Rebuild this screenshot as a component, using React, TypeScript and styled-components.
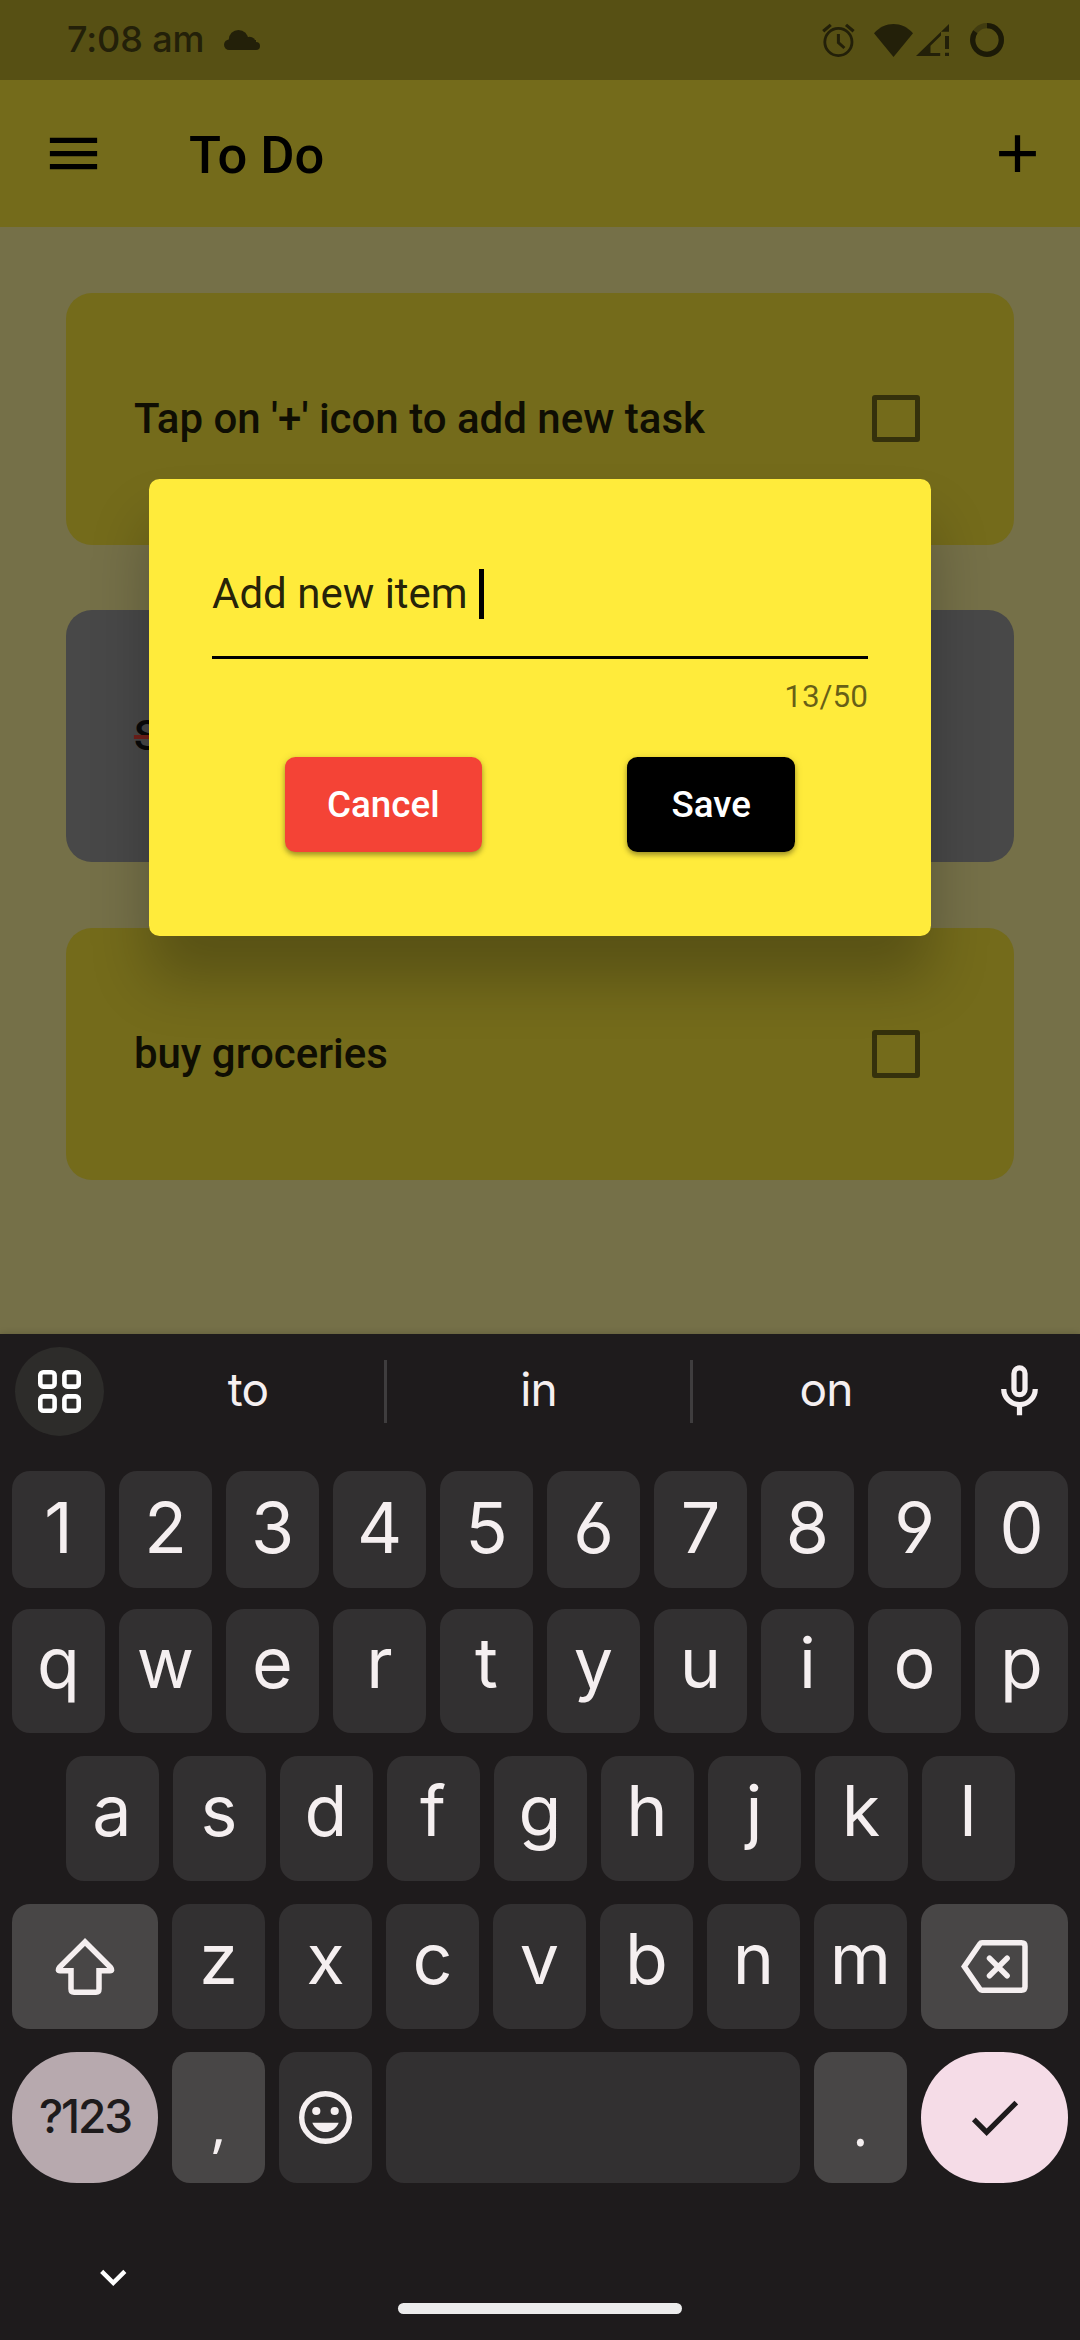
import React from "react";
import styled, { createGlobalStyle } from "styled-components";

const GlobalStyle = createGlobalStyle`
  html, body {
    margin: 0;
    padding: 0;
    background: #1e1b1c;
  }
  * { box-sizing: border-box; }
  button { border: 0; margin: 0; padding: 0; font: inherit; }
`;

const Screen = styled.div`
  position: relative;
  width: 1080px;
  height: 2340px;
  overflow: hidden;
  display: flex;
  flex-direction: column;
  font-family: Roboto, sans-serif;
`;

/* ---------- Status bar ---------- */

const StatusBar = styled.header`
  height: 80px;
  flex: none;
  display: flex;
  align-items: center;
  padding: 0 76px 0 67px;
  background: #575014;
  color: #232009;
`;

const Clock = styled.span`
  width: 137px;
  margin-right: 20px;
  padding-bottom: 2px;
  font: 450 36px/78px Inter, sans-serif;
  letter-spacing: -0.1px;
  white-space: nowrap;
`;

const StatusIcons = styled.div`
  margin-left: auto;
  display: flex;
  align-items: center;
`;

const StatusIcon = styled.svg<{ $after?: number }>`
  display: block;
  margin-right: ${(p) => p.$after ?? 0}px;
`;

/* ---------- Page ---------- */

const Page = styled.main`
  position: relative;
  height: 1254px;
  flex: none;
  display: flex;
  flex-direction: column;
  background: #757048;
`;

const AppBar = styled.div`
  height: 147px;
  display: flex;
  align-items: center;
  padding: 0 31px 0 42px;
  background: #746b1b;
  color: #000;
`;

const BarTitle = styled.h1`
  flex: 1;
  margin: 0 0 0 84px;
  padding-top: 3px;
  font-size: 52.5px;
  font-weight: 500;
  line-height: 60px;
`;

const IconButton = styled.button`
  display: flex;
  background: none;
  color: inherit;
`;

const TaskList = styled.div`
  display: flex;
  flex-direction: column;
  gap: 65.6px;
  padding: 65.6px;
`;

const TaskCard = styled.div<{ $done?: boolean }>`
  height: 252px;
  display: flex;
  align-items: center;
  justify-content: space-between;
  padding: 0 94.5px 0 68.3px;
  border-radius: 26px;
  background: ${(p) => (p.$done ? "#484848" : "#746b1b")};
`;

const TaskText = styled.span<{ $done?: boolean }>`
  font-size: 42px;
  font-weight: 500;
  line-height: 48px;
  color: ${(p) => (p.$done ? "#090909" : "#0f0e03")};
  text-decoration: ${(p) => (p.$done ? "line-through #701f19 4px" : "none")};
`;

const Checkbox = styled.span`
  width: 47.5px;
  height: 47.5px;
  border: 5px solid #35310c;
  border-radius: 3px;
`;

/* ---------- Dialog ---------- */

const DialogLayer = styled.div`
  position: absolute;
  inset: 80px 0 1006px;
  display: flex;
  justify-content: center;
  align-items: center;
`;

const Dialog = styled.form`
  width: 782px;
  height: 457px;
  display: flex;
  flex-direction: column;
  padding: 79px 63px 84px;
  border-radius: 10.5px;
  background: #ffeb3b;
  box-shadow: 0 44px 58px rgba(0, 0, 0, 0.24);
`;

const Field = styled.div`
  height: 101px;
  display: flex;
  align-items: flex-start;
  padding-top: 11px;
  border-bottom: 3px solid #000;
`;

const FieldText = styled.span`
  font-size: 42px;
  line-height: 50px;
  white-space: pre;
  color: rgba(0, 0, 0, 0.87);
`;

const Caret = styled.span`
  width: 5.5px;
  height: 50px;
  margin-left: 0.5px;
  background: #000;
`;

const Counter = styled.div`
  margin-top: 19px;
  font-size: 31.5px;
  line-height: 37px;
  text-align: right;
  color: rgba(0, 0, 0, 0.6);
`;

const Actions = styled.div`
  display: flex;
  justify-content: space-around;
  margin-top: auto;
`;

const ActionButton = styled.button<{ $tone: string; $width: number }>`
  width: ${(p) => p.$width}px;
  height: 94.5px;
  padding-top: 1px;
  border-radius: 10.5px;
  background: ${(p) => p.$tone};
  color: #fff;
  font-size: 36.75px;
  font-weight: 500;
  line-height: 94px;
  box-shadow: 0 3px 5px rgba(0, 0, 0, 0.32), 0 1px 10px rgba(0, 0, 0, 0.12);
`;

/* ---------- Keyboard ---------- */

const Keyboard = styled.section`
  position: relative;
  flex: 1;
  display: flex;
  flex-direction: column;
  background: #1e1b1c;
  color: #f5eff0;
  font-family: Inter, sans-serif;
  box-shadow: 0 0 7px rgba(0, 0, 0, 0.18);
`;

const SuggestionStrip = styled.div`
  height: 137px;
  display: flex;
  align-items: flex-start;
  padding: 13px 29px 0 15px;
`;

const ToolsButton = styled.button`
  width: 89px;
  height: 89px;
  display: grid;
  place-items: center;
  border-radius: 50%;
  background: #2d2c2a;
`;

const Suggestion = styled.span<{ $width: number; $shift?: number }>`
  width: ${(p) => p.$width}px;
  padding-left: ${(p) => p.$shift ?? 0}px;
  font-size: 46px;
  line-height: 85px;
  letter-spacing: -0.8px;
  text-align: center;
`;

const Divider = styled.span`
  width: 3px;
  height: 63px;
  margin-top: 13px;
  background: #3f3d3e;
`;

const MicButton = styled(IconButton)`
  margin: 13px 0 0 auto;
`;

const KeyRow = styled.div<{ $height: number; $after?: number }>`
  height: ${(p) => p.$height}px;
  display: flex;
  justify-content: center;
  gap: 14px;
  padding: 0 12px;
  margin-bottom: ${(p) => p.$after ?? 23}px;
`;

const Key = styled.button<{ $func?: boolean; $width?: number; $lift?: number }>`
  width: ${(p) => p.$width ?? 93}px;
  height: 100%;
  display: flex;
  align-items: center;
  justify-content: center;
  padding-bottom: ${(p) => p.$lift ?? 0}px;
  border-radius: 18px;
  background: ${(p) => (p.$func ? "#484646" : "#323031")};
  color: #f5eff0;
  font-size: 70px;
  line-height: 84px;
  font-feature-settings: "cv03", "cv04";
`;

const PunctuationKey = styled(Key)`
  padding-top: 10px;
  font-family: "Open Sans", sans-serif;
  font-size: 60px;
`;

const PillKey = styled(Key)<{ $tone: string }>`
  border-radius: 65px;
  background: ${(p) => p.$tone};
  color: #1e1b1c;
  font-size: 46px;
  font-weight: 500;
  letter-spacing: -2.1px;
`;

const NavBar = styled.footer`
  flex: 1;
  display: grid;
  grid-template-columns: 398px 284px 1fr;
`;

const HideButton = styled(IconButton)`
  margin: 45px 0 0 87px;
  align-self: start;
`;

const HomePill = styled.span`
  height: 11px;
  margin-top: 97px;
  border-radius: 5.5px;
  background: #ececec;
`;

/* ---------- Icons ---------- */

const CloudIcon = () => (
  <StatusIcon width="36" height="20" viewBox="0 0 36 20" fill="currentColor">
    <circle cx="14.5" cy="9.8" r="9.8" />
    <circle cx="25.6" cy="13" r="6.2" />
    <circle cx="5.2" cy="14.8" r="5.2" />
    <circle cx="32" cy="16" r="4" />
    <rect x="5" y="10" width="27" height="10" />
  </StatusIcon>
);

const AlarmIcon = () => (
  <StatusIcon $after={19} width="33" height="35" viewBox="0 0 33 35" fill="none" stroke="currentColor">
    <circle cx="16.4" cy="19" r="13.6" strokeWidth="2.8" />
    <path d="M16.4 11V19.6L22.4 25" strokeWidth="3" />
    <path d="M1.2 8.3L8.8 1.9M24 1.9L31.6 8.3" strokeWidth="3.2" />
  </StatusIcon>
);

const WifiIcon = () => (
  <StatusIcon $after={3} width="39" height="33" viewBox="0 0 39 33" fill="currentColor">
    <path d="M0 9.3C11-3 28-3 39 9.3L19.5 33Z" />
  </StatusIcon>
);

const SignalIcon = () => (
  <StatusIcon $after={21} width="33" height="32" viewBox="0 0 33 32" fill="currentColor">
    <path d="M0 32L33 0V7.8H25V11.6L14.5 21.8V29H24.2V32Z" />
    <path d="M29 12h4v13h-4zM29 28.7h4V32h-4z" />
  </StatusIcon>
);

const BatteryIcon = () => (
  <StatusIcon width="34" height="34" viewBox="0 0 34 34" fill="none" strokeWidth="5.2">
    <circle cx="17" cy="17" r="14.3" stroke="#413c10" />
    <path d="M17 2.7A14.3 14.3 0 1 1 5.3 8.8" stroke="#1c1a07" />
  </StatusIcon>
);

const MenuIcon = () => (
  <svg width="63" height="63" viewBox="0 0 24 24" fill="currentColor">
    <path d="M3 18h18v-2H3v2zm0-5h18v-2H3v2zm0-7v2h18V6H3z" />
  </svg>
);

const AddIcon = () => (
  <svg width="63" height="63" viewBox="0 0 24 24" fill="currentColor">
    <path d="M19 13h-6v6h-2v-6H5v-2h6V5h2v6h6v2z" />
  </svg>
);

const GridIcon = () => (
  <svg width="43" height="43" viewBox="0 0 43 43" fill="none" stroke="#fff" strokeWidth="4.6">
    {[2.3, 26.4].map((y) =>
      [2.3, 26.4].map((x) => <rect key={`${x}-${y}`} x={x} y={y} width="14.3" height="14.3" rx="3" />)
    )}
  </svg>
);

const MicIcon = () => (
  <svg width="63" height="63" viewBox="0 0 24 24" fill="none" stroke="#f5eff0" strokeWidth="2">
    <rect x="9.9" y="3" width="4.2" height="10.2" rx="2.1" />
    <path d="M6 11a6 6 0 0 0 12 0M12 17v4" />
  </svg>
);

const ShiftIcon = () => (
  <svg width="60" height="58" viewBox="0 0 60 58" fill="none" stroke="currentColor" strokeWidth="5.5">
    <path d="M30 4L4.3 29.6Q2 32.7 5 32.7H16V51Q16 54.2 19 54.2H41Q44 54.2 44 51V32.7H55Q58 32.7 55.7 29.6Z" />
  </svg>
);

const BackspaceIcon = () => (
  <svg width="67" height="53" viewBox="0 0 67 53" fill="none" stroke="currentColor" strokeWidth="5.5">
    <path d="M21 2.8H60.5Q64 2.8 64 6.3V46.7Q64 50.2 60.5 50.2H21Q19.6 50.2 18.8 49L3.3 26.5L18.8 4Q19.6 2.8 21 2.8Z" />
    <path d="M28.5 18.2L46.1 35.8M46.1 18.2L28.5 35.8" strokeLinecap="round" />
  </svg>
);

const EmojiIcon = () => (
  <svg width="53" height="53" viewBox="0 0 53 53" fill="currentColor">
    <circle cx="26.5" cy="26.5" r="23.8" fill="none" stroke="currentColor" strokeWidth="5.4" />
    <circle cx="17.3" cy="20" r="4.1" />
    <circle cx="35.7" cy="20" r="4.1" />
    <path d="M13.3 31.7H39.7C37.5 37.2 32.5 41 26.5 41S15.5 37.2 13.3 31.7Z" />
  </svg>
);

const CheckIcon = () => (
  <svg width="63" height="63" viewBox="0 0 24 24" fill="currentColor">
    <path d="M9 16.17L4.83 12l-1.42 1.41L9 19 21 7l-1.41-1.41z" />
  </svg>
);

const ChevronIcon = () => (
  <svg width="52.5" height="52.5" viewBox="0 0 24 24" fill="#fff">
    <path d="M16.59 8.59L12 13.17 7.41 8.59 6 10l6 6 6-6z" />
  </svg>
);

const DIGITS = "1234567890".split("");
const TOP_LETTERS = "qwertyuiop".split("");
const HOME_LETTERS = "asdfghjkl".split("");
const BOTTOM_LETTERS = "zxcvbnm".split("");

const TASKS = [
  { text: "Tap on '+' icon to add new task", done: false },
  { text: "S", done: true },
  { text: "buy groceries", done: false },
];

export default function App() {
  return (
    <>
      <GlobalStyle />
      <Screen>
        <StatusBar>
          <Clock>7:08 am</Clock>
          <CloudIcon />
          <StatusIcons>
            <AlarmIcon />
            <WifiIcon />
            <SignalIcon />
            <BatteryIcon />
          </StatusIcons>
        </StatusBar>

        <Page>
          <AppBar>
            <IconButton aria-label="Menu"><MenuIcon /></IconButton>
            <BarTitle>To Do</BarTitle>
            <IconButton aria-label="Add"><AddIcon /></IconButton>
          </AppBar>
          <TaskList>
            {TASKS.map((task) => (
              <TaskCard key={task.text} $done={task.done}>
                <TaskText $done={task.done}>{task.text}</TaskText>
                {!task.done && <Checkbox />}
              </TaskCard>
            ))}
          </TaskList>
        </Page>

        <DialogLayer>
          <Dialog>
            <Field>
              <FieldText>{"Add new item "}</FieldText>
              <Caret />
            </Field>
            <Counter>13/50</Counter>
            <Actions>
              <ActionButton type="button" $tone="#f44336" $width={197}>Cancel</ActionButton>
              <ActionButton type="button" $tone="#000" $width={168}>Save</ActionButton>
            </Actions>
          </Dialog>
        </DialogLayer>

        <Keyboard>
          <SuggestionStrip>
            <ToolsButton aria-label="Tools"><GridIcon /></ToolsButton>
            <Suggestion $width={280} $shift={8}>to</Suggestion>
            <Divider />
            <Suggestion $width={303}>in</Suggestion>
            <Divider />
            <Suggestion $width={266}>on</Suggestion>
            <MicButton aria-label="Voice input"><MicIcon /></MicButton>
          </SuggestionStrip>

          <KeyRow $height={117} $after={21}>
            {DIGITS.map((k) => <Key key={k} $lift={4}>{k}</Key>)}
          </KeyRow>
          <KeyRow $height={124}>
            {TOP_LETTERS.map((k) => <Key key={k} $lift={16}>{k}</Key>)}
          </KeyRow>
          <KeyRow $height={125}>
            {HOME_LETTERS.map((k) => <Key key={k} $lift={16}>{k}</Key>)}
          </KeyRow>
          <KeyRow $height={125}>
            <Key $func $width={146} aria-label="Shift"><ShiftIcon /></Key>
            {BOTTOM_LETTERS.map((k) => <Key key={k} $lift={16}>{k}</Key>)}
            <Key $func $width={147} aria-label="Backspace"><BackspaceIcon /></Key>
          </KeyRow>
          <KeyRow $height={131}>
            <PillKey $tone="#b7a9ae" $width={146} $lift={4}>?123</PillKey>
            <PunctuationKey $func>,</PunctuationKey>
            <Key aria-label="Emoji"><EmojiIcon /></Key>
            <Key $width={414} aria-label="Space" />
            <PunctuationKey $func>.</PunctuationKey>
            <PillKey $tone="#f5dce7" $width={147} aria-label="Done"><CheckIcon /></PillKey>
          </KeyRow>

          <NavBar>
            <HideButton aria-label="Hide keyboard"><ChevronIcon /></HideButton>
            <HomePill />
          </NavBar>
        </Keyboard>
      </Screen>
    </>
  );
}
